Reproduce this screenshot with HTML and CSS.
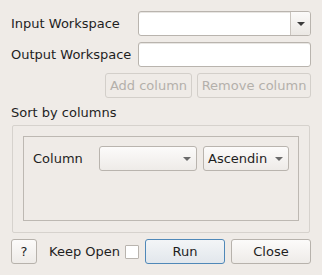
FILE: index.html
```html
<!DOCTYPE html>
<html>
<head>
<meta charset="utf-8">
<link rel="stylesheet" href="styles.css">
</head>
<body>
<div class="dialog">
  <div class="row">
    <span class="label">Input Workspace</span>
    <div class="combo combo-main">
      <div class="combo-text"></div>
      <div class="combo-btn"><span class="arrow"></span></div>
    </div>
  </div>
  <div class="row gap-top">
    <span class="label">Output Workspace</span>
    <div class="field"></div>
  </div>
  <div class="row gap-top right">
    <div class="btn disabled w-add">Add column</div>
    <div class="btn disabled w-remove">Remove column</div>
  </div>
  <div class="sort-label">Sort by columns</div>
  <div class="group">
    <div class="frame">
      <div class="inner-row">
        <span class="label">Column</span>
        <div class="combo combo-col"><div class="combo-text"></div><span class="arrow light"></span></div>
        <div class="combo combo-order"><div class="combo-text">Ascendin</div><span class="arrow light"></span></div>
      </div>
    </div>
  </div>
  <div class="bottom">
    <div class="btn w-help">?</div>
    <span class="keep">Keep Open</span>
    <div class="check"></div>
    <div class="btn default w-run">Run</div>
    <div class="btn w-close">Close</div>
  </div>
</div>
</body>
</html>
```
FILE: styles.css
```css
html, body {
  margin: 0;
  padding: 0;
  background: #efebe7;
}
body {
  width: 322px;
  height: 275px;
  overflow: hidden;
  font-family: "DejaVu Sans", sans-serif;
  font-size: 13px;
  color: #1e1e1e;
}
.dialog {
  display: flex;
  flex-direction: column;
  padding: 11px 11px 0 11px;
}
.row {
  display: flex;
  align-items: center;
  height: 25px;
}
.gap-top { margin-top: 6px; }
.right { justify-content: flex-end; gap: 5px; }
.label { flex: 1; white-space: nowrap; }
.combo, .field {
  box-sizing: border-box;
  height: 25px;
  border: 1px solid #b9b4ae;
  border-radius: 3px;
  display: flex;
  align-items: center;
}
.field {
  width: 173px;
  background: #fff;
  box-shadow: inset 0 1px 0 #e8e6e3;
}
.combo-main {
  width: 173px;
  background: #fff;
  box-shadow: inset 0 1px 0 #e8e6e3;
}
.combo-main .combo-text { flex: 1; height: 100%; }
.combo-btn {
  width: 19px;
  height: 100%;
  border-left: 1px solid #c9c4be;
  background: linear-gradient(#fbfaf9, #ebe8e4);
  border-radius: 0 2px 2px 0;
  display: flex;
  align-items: center;
  justify-content: center;
}
.arrow {
  width: 0;
  height: 0;
  border-left: 4px solid transparent;
  border-right: 4px solid transparent;
  border-top: 4px solid #3c3c3c;
}
.arrow.light { border-top-color: #6a6a6a; margin-right: 5px; }
.btn {
  box-sizing: border-box;
  height: 25px;
  border: 1px solid #b7b2ac;
  border-radius: 3px;
  background: linear-gradient(#fcfbfa, #eeebe8);
  display: flex;
  align-items: center;
  justify-content: center;
  white-space: nowrap;
}
.btn.disabled {
  color: #b4b0ab;
  border-color: #d3cfca;
  background: #efebe7;
}
.w-add { width: 87px; }
.w-remove { width: 114px; }
.sort-label {
  margin-top: 7px;
  height: 15px;
  line-height: 15px;
}
.group {
  box-sizing: border-box;
  margin-top: 5px;
  margin-left: 1px;
  width: 298px;
  height: 108px;
  border: 1px solid #d6d2cd;
  border-radius: 2px;
  padding: 10px;
}
.frame {
  box-sizing: border-box;
  width: 276px;
  height: 85px;
  border: 1px solid #bdb8b2;
  padding: 9px 9px 0 9px;
}
.inner-row {
  display: flex;
  align-items: center;
  height: 25px;
}
.combo-col, .combo-order {
  background: linear-gradient(#fcfbfa, #eeebe8);
}
.combo-col { width: 98px; }
.combo-order { width: 86px; margin-left: 6px; }
.combo-col .combo-text, .combo-order .combo-text {
  flex: 1;
  padding-left: 4px;
  white-space: nowrap;
}
.bottom {
  display: flex;
  align-items: center;
  margin-top: 6px;
  height: 25px;
}
.w-help { width: 26px; }
.keep { margin-left: auto; white-space: nowrap; }
.check {
  box-sizing: border-box;
  width: 14px;
  height: 14px;
  margin-left: 5px;
  border: 1px solid #b9b4ae;
  background: #fff;
  border-radius: 1px;
}
.w-run { width: 80px; margin-left: 6px; }
.w-close { width: 80px; margin-left: 6px; }
.btn.default {
  border-color: #4f88b8;
  background: linear-gradient(#f3f5f7, #e2e7ec);
}
```
